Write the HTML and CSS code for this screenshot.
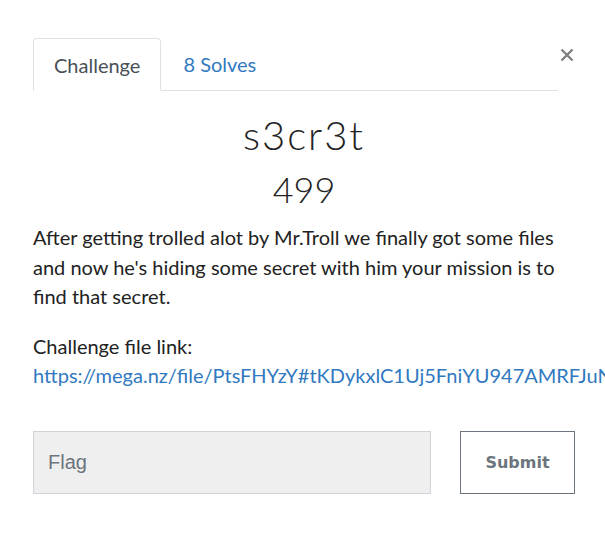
FILE: index.html
```html
<!DOCTYPE html>
<html>
<head>
<meta charset="utf-8">
<link rel="stylesheet" href="styles.css">
</head>
<body>
<div class="modal">
  <div class="tabs-row">
    <ul class="tabs">
      <li class="tab active">Challenge</li>
      <li class="tab link">8 Solves</li>
    </ul>
    <span class="close" aria-label="Close"><svg width="14" height="14" viewBox="0 0 14 14"><path d="M1.5 1.5 L12.5 12.5 M12.5 1.5 L1.5 12.5" stroke="#808080" stroke-width="2.4" fill="none"/></svg></span>
  </div>
  <div class="content">
    <h2 class="title">s3cr3t</h2>
    <h3 class="points">499</h3>
    <p class="desc">After getting trolled alot by Mr.Troll we finally got some files and now he's hiding some secret with him your mission is to find that secret.</p>
    <p class="desc linkpara">Challenge file link:<br><a class="file" href="#">https://mega.nz/file/PtsFHYzY#tKDykxlC1Uj5FniYU947AMRFJuNpYIJx5xp6M1zMw6E</a></p>
    <div class="form">
      <input class="flag" type="text" placeholder="Flag">
      <button class="submit">Submit</button>
    </div>
  </div>
</div>
</body>
</html>
```
FILE: styles.css
```css
html, body {
  margin: 0;
  padding: 0;
  background: #fff;
  overflow: hidden;
}
body {
  font-family: Lato, "Noto Sans", sans-serif;
  color: #212529;
  width: 605px;
  height: 548px;
}
.modal {
  padding: 38px 0 0 33px;
}
.tabs-row {
  display: flex;
  align-items: flex-start;
  width: 525px;
}
.tabs {
  list-style: none;
  margin: 0;
  padding: 0;
  display: flex;
  flex: 1;
  border-bottom: 1px solid #dee2e6;
  height: 52px;
}
.tab {
  font-size: 20px;
  padding: 0 21px;
  line-height: 52px;
  height: 52px;
  box-sizing: border-box;
}
.tab.active {
  border: 1px solid #dee2e6;
  border-bottom: 1px solid #fff;
  border-radius: 4px 4px 0 0;
  height: 53px;
  color: #495057;
  background: #fff;
  padding: 0 20px;
}
.tab.link {
  color: #3179c0;
  padding-left: 22px;
}
.close {
  position: absolute;
  left: 560px;
  top: 48px;
  width: 14px;
  height: 14px;
  line-height: 0;
}
.content {
  width: 542px;
}
.title {
  text-align: center;
  margin: 18px 0 0 0;
  font-weight: 300;
  font-size: 40px;
  line-height: 52px;
  letter-spacing: 2px;
  color: #222;
}
.points {
  text-align: center;
  margin: 6px 0 0 0;
  font-weight: 300;
  font-size: 36px;
  line-height: 44px;
  color: #222;
}
.desc {
  margin: 12px 0 20px 0;
  font-size: 20px;
  line-height: 29.5px;
  color: #222;
  width: 540px;
}
.linkpara {
  margin-top: 0;
  white-space: nowrap;
  width: 572px;
  overflow: hidden;
}
.file {
  color: #3179c0;
  text-decoration: none;
}
.form {
  display: flex;
  margin-top: 40px;
  gap: 29px;
}
.flag {
  flex: 0 0 398px;
  width: 398px;
  height: 63px;
  box-sizing: border-box;
  background: #efefef;
  border: 1px solid #ced4da;
  font-family: "Liberation Sans", sans-serif;
  font-size: 20px;
  padding: 0 14px;
  margin: 0;
  color: #495057;
}
.flag::placeholder {
  color: #6c757d;
}
.submit {
  flex: 0 0 115px;
  width: 115px;
  height: 63px;
  background: #fff;
  border: 1px solid #6c757d;
  font-family: "DejaVu Sans", sans-serif;
  font-weight: 700;
  font-size: 16px;
  color: #6c757d;
  margin: 0;
  padding: 0;
}
```
